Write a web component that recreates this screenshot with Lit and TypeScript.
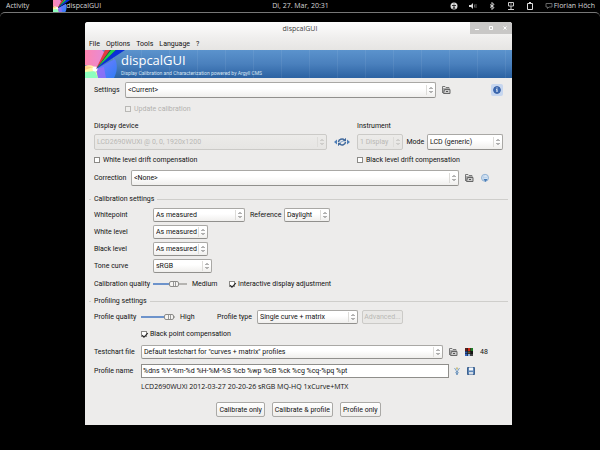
import { LitElement, html, css, svg } from "lit";
import { customElement, property } from "lit/decorators.js";

@customElement("drop-down")
class DropDown extends LitElement {
  @property() value = "";
  @property() label = "";
  @property({ type: Boolean }) disabled = false;

  static styles = css`
    :host { display: block; position: relative; height: 14px; min-width: 0; }
    .box {
      appearance: none; display: block; box-sizing: border-box; width: 100%; height: 100%;
      margin: 0; padding: 0 8px 0 2px; border: 1px solid #a9a8a5; border-bottom-color: #91908d;
      border-radius: 2px; background: linear-gradient(#fff 40%, #f0efed);
      color: #111; font: inherit; text-overflow: clip;
    }
    .box:disabled { opacity: 1; color: #b9b8b5; border-color: #cbcac7; background: linear-gradient(#ecebe9, #e6e5e3); }
    .arrows { position: absolute; right: 1px; top: 0; width: 9px; height: 100%; pointer-events: none; }
    .mark { fill: none; stroke: #666; stroke-width: 1; }
    .rule { stroke: #dddcd9; }
    .off .mark { stroke: #b5b4b1; }
  `;

  render() {
    return html`
      <select class="box" aria-label=${this.label} ?disabled=${this.disabled}>
        <option>${this.value}</option>
      </select>
      <svg class="arrows ${this.disabled ? "off" : ""}" viewBox="0 0 9 14" aria-hidden="true">
        <path class="rule" d="M.5 2v10" />
        <path class="mark" d="M3.500 6l1.500-1.500 1.500 1.500M3.500 8l1.500 1.500 1.500-1.500" />
      </svg>`;
  }
}

const folder = svg`<path d="M1.500 8V1.500h2.500l1 1h3V4" fill="none" stroke="#777"/><path d="M2 3h6v5H2z" fill="#aaa"/><path d="M3.500 4.500h5.500v4H2.500z" fill="#ccc" stroke="#666"/><path d="M5 6h2v1H5z" fill="#555"/>`;
const info = svg`<circle cx="5" cy="5" r="3.400" fill="#3c69b2" stroke="#3a62a6"/><path d="M4.500 2.500h1v1h-1zM4 4.300h1.500V7h-1V5H4z" fill="#fff"/>`;
const refresh = svg`<path d="M0 5l3-2.500v5zM16 5l-3-2.500v5z" fill="#4f7fb8"/><path d="M4.500 5a3.500 3 0 0 1 6-2M11.500 5a3.500 3 0 0 1-6 2" fill="none" stroke="#41699c" stroke-width="1.500"/><path d="M12 .8v3.400H8.600zM4 9.200V5.800h3.400z" fill="#41699c"/><path d="M6 5.500l3-1.500" stroke="#7da2cf"/>`;
const globe = svg`<circle cx="5" cy="4.800" r="3.500" fill="#d5e4f3" stroke="#8fb0d3"/><path d="M2.500 4.500h5M5 1.500c-2 2-2 4 0 6" fill="none" stroke="#b4cce6" stroke-width=".7"/><path d="M3.500 6h4L5.500 9z" fill="#4a7db6"/>`;
const swatches = svg`<path d="M1 1h8v8H1z" fill="#151515"/><path d="M1 1h2.500v3H1z" fill="#55201c"/><path d="M4 1h2.300v3H4z" fill="#d02818"/><path d="M6.700 1H9v3H6.700z" fill="#1d7c25"/><path d="M1 4.500h2.500v2H1z" fill="#2b55a8"/><path d="M4 4.500h2.300v2H4z" fill="#6a5a38"/><path d="M1 7h2.500v2H1z" fill="#3263bd"/><path d="M4 7h2.300v2H4z" fill="#8cb4e0"/><path d="M6.700 7H9v2H6.700z" fill="#444"/>`;
const wand = svg`<path d="M2.500 2l2.500 4 2.500-4M3.500 6L5 8.500 6.500 6" fill="none" stroke="#7fa5cb"/><path d="M4 1.500h2v2H4z" fill="#c9bd84"/><path d="M5 5v4" stroke="#5681ae"/>`;
const disk = svg`<path d="M1.500 1.500h7v7h-7z" fill="#5c86b8" stroke="#3f628f"/><path d="M3 1.500h4v3H3z" fill="#f3f6fa"/><path d="M3 6h4v2.500H3z" fill="#d6dde6"/>`;
const icon = (body: unknown, w = 10) => html`<svg class="ico" width=${w} height="10" viewBox="0 0 ${w} 10" aria-hidden="true">${body}</svg>`;
const fan = (w: number, h: number) => html`
  <svg class="fan" width=${w} height=${h} viewBox="0 0 42 28" preserveAspectRatio="none" aria-hidden="true">
    <defs>
      <linearGradient id="pk" x2="1" y2="0"><stop stop-color="#ff86b0" /><stop offset="1" stop-color="#e58bd8" /></linearGradient>
      <linearGradient id="bl" x1="0" y1="0" x2="1" y2="1"><stop stop-color="#7a7cff" /><stop offset="1" stop-color="#2f7df5" /></linearGradient>
    </defs>
    <path d="M0 0h17l3 3-9 16L0 15z" fill="url(#pk)" />
    <path d="M11 19L30 9c3 6 2 13-1 19H13z" fill="url(#bl)" />
    <path d="M11 19l8-2 2 11h-8z" fill="#a06cf5" opacity=".7" />
    <path d="M0 16c5-2 10 0 11 3l2 9H0z" fill="#fff7a8" />
    <path d="M0 22l10-1 3 7H0z" fill="#8dffbe" /><path d="M0 16l8 1-8 3z" fill="#ffd08c" />
    <circle cx="10" cy="19" r="2.500" fill="#fff" />
    <path d="M11 19L20 0h6z" fill="#e43b42" />
    <path d="M11 19L25 0h7z" fill="#1d4a3c" />
    <path d="M12 18L26 0h5z" fill="#22cf4e" />
    <path d="M11 19L31 0h9z" fill="#0a2fd8" />
  </svg>`;

@customElement("app-root")
class AppRoot extends LitElement {
  static styles = css`
    :host { display: block; min-height: 100vh; background: #000; color: #111; font: 7px/12px Roboto, "Open Sans", sans-serif; }
    * { box-sizing: border-box; }
    .panel, .caption, .brand, .output { font-family: "Open Sans", "Noto Sans", sans-serif; }
    .panel { display: grid; grid-template-columns: 1fr auto 1fr; align-items: center; height: 12px; padding: 0 5px 0 6px; color: #d6d6d6; }
    .left, .right { display: flex; align-items: center; }
    .app { display: flex; align-items: center; margin-left: 24px; }
    .app-name { margin-left: -5px; position: relative; }
    .right { justify-content: flex-end; gap: 9px; }
    .user { display: flex; align-items: center; }
    .edge { height: 10px; border-top: 1px solid #777; border-radius: 5px 5px 0 0; }
    .window { margin: 0 88px 0 85px; background: #edeceb; border-radius: 3px 3px 0 0; overflow: hidden; }
    .title { display: grid; grid-template-columns: 1fr auto 1fr; align-items: start; height: 16px; background: linear-gradient(#fdfdfd, #efeeed); }
    .caption { grid-column: 2; margin: 0; padding-left: 3px; font-size: 7px; line-height: 14px; font-weight: 400; color: #444; }
    .controls { justify-self: end; display: flex; background: #c9c8c7; }
    .control { width: 14px; height: 12px; padding: 0; border: 0; background: none; display: grid; place-items: center; }
    .menu { display: flex; gap: 6px; height: 12px; padding: 0 4px; background: linear-gradient(#efeeed, #e6e5e3); }
    .menu-item { padding: 0; border: 0; background: none; font: inherit; color: #111; }
    .banner { display: flex; height: 28px; color: #fff; background: repeating-linear-gradient(90deg, #fff1 0 1px, #fff0 1px 28px), linear-gradient(#5b93cd, #4a80bd 50%, #2b62a2); }
    .fan { flex: none; display: block; }
    .words { margin-left: -6px; position: relative; }
    .brand { margin: 0; font-size: 13px; line-height: 20px; font-weight: 400; }
    .tagline { margin: 0; font-size: 5px; line-height: 6px; color: #d6e4f3; }
    .body { padding: 4px 9px 8px; }
    .row { display: flex; align-items: center; height: 14px; }
    .tall { height: 16px; }
    .low { height: 12px; }
    .grow { flex: 1; }
    .fit { height: 100%; }
    .g2 { margin-top: 2px; } .g3 { margin-top: 3px; } .g4 { margin-top: 4px; } .g5 { margin-top: 5px; } .g7 { margin-top: 7px; }
    .name, .tail, .ico { flex: none; }
    .name, .check, .text { white-space: nowrap; }
    .settings { width: 31px; } .correction { width: 37px; } .cal { width: 59px; } .prof { width: 47px; }
    .reference { width: 34px; } .kind { width: 40px; }
    .devices { display: grid; grid-template-columns: 1fr 30px 146px; align-items: center; }
    .tail { display: flex; align-items: center; gap: 6px; padding-left: 5px; }
    .t67 { width: 67px; } .t60 { width: 60px; } .t54 { width: 54px; gap: 4px; padding-left: 3px; } .t44 { width: 44px; }
    .ico { display: block; }
    .center { justify-self: center; }
    .tool { padding: 0; border: 0; background: none; flex: none; }
    .info { margin-left: auto; padding: 1px; background: #c6d6ef; border-radius: 2px; }
    .check { display: flex; align-items: center; gap: 3px; }
    .faded { color: #b3b2af; }
    .tick { appearance: none; flex: none; width: 6px; height: 6px; margin: 0; border: 1px solid #8b8a87; background: #fff; display: grid; place-items: center; }
    .tick:disabled { border-color: #b9b8b5; background: #efeeec; }
    .tick:checked::before { content: ""; width: 5px; height: 2px; border: solid #222; border-width: 0 0 1px 1px; transform: rotate(-45deg); }
    .heading { display: flex; align-items: center; gap: 3px; margin-inline: -5px; margin-bottom: 0; height: 12px; font-size: inherit; font-weight: 400; }
    .heading::before, .heading::after { content: ""; height: 1px; background: #cfcecb; width: 2px; }
    .heading::after { flex: 1; }
    .w92 { width: 92px; } .w101 { width: 101px; } .w55 { width: 55px; } .w59 { width: 59px; } .w46 { width: 46px; } .w76 { width: 76px; }
    .slider { appearance: none; flex: none; width: 34px; height: 8px; margin: 0; background: linear-gradient(90deg, #6d93cb var(--fill), #b5b4b1 0) center / 100% 2px no-repeat; }
    .slider::-webkit-slider-thumb { appearance: none; width: 10px; height: 6px; border: 1px solid #8d8c89; border-radius: 2px; background: linear-gradient(90deg, transparent 3px, #999 3px 4px, transparent 4px 5px, #999 5px 6px, transparent 6px), #f5f4f2; }
    .after { margin-left: 5px; }
    .entry { height: 100%; min-width: 0; padding: 0 1px; border: 1px solid #8f8e8b; background: #fff; color: #111; font: inherit; }
    .push { height: 14px; padding: 0; border: 1px solid #aaa9a6; border-radius: 2px; background: linear-gradient(#fff, #eeedeb); color: #111; font: inherit; }
    .push:disabled { width: 41px; margin-left: 4px; color: #b9b8b5; border-color: #cbcac7; background: #e9e8e6; }
    .actions { display: flex; justify-content: center; gap: 7px; margin: 9px 0 0; }
    .action { height: 15px; padding: 0 2px; }
  `;

  private check(text: string, on = false, off = false) {
    return html`<label class="check ${off ? "faded" : ""}"><input class="tick" type="checkbox" ?checked=${on} ?disabled=${off} />${text}</label>`;
  }

  private drop(label: string, value: string, cls: string, off = false) {
    return html`<drop-down class=${cls} .label=${label} .value=${value} .disabled=${off}></drop-down>`;
  }

  private tool(label: string, body: unknown, cls = "") {
    return html`<button class="tool ${cls}" aria-label=${label}>${icon(body)}</button>`;
  }

  private slider(id: string, value: number) {
    return html`<input class="slider" id=${id} type="range" .value=${String(value)} style="--fill:${value}%" />`;
  }

  render() {
    return html`
      <header class="panel">
        <div class="left"><span>Activity</span><span class="app">${fan(18, 12)}<span class="app-name">dispcalGUI</span></span></div>
        <time>Di, 27. Mar, 20:31</time>
        <div class="right">
          ${icon(svg`<circle cx="5" cy="5" r="3.500" fill="#ddd"/><path d="M5 2.500v1M3 4.500h4M5 4v2M4 8l1-2 1 2" stroke="#222" stroke-width=".9" fill="none"/>`)}
          ${icon(svg`<path d="M1 4h2l2-2v6L3 6H1z" fill="#ddd"/><path d="M6.500 3.500v3M8 3v4" stroke="#777" stroke-width=".8"/>`)}
          ${icon(svg`<path d="M3 3.500l4 3-2 2v-7l2 2-4 3" stroke="#ddd" fill="none"/>`)}
          ${icon(svg`<path d="M2.500 1.500h5v3.500h-5zM5 5v3M2 8.500h6" stroke="#ccc" fill="none"/><path d="M4 3h2" stroke="#888"/>`)}
          ${icon(svg`<path d="M2.500 2.500h5v6h-5zM4 1.500h2" stroke="#ddd" fill="none"/>`)}
          <span class="user">${icon(svg`<path d="M2 2.500h6v3.500H5L3.500 7.500V6H2z" stroke="#666" fill="none"/>`)}Florian Höch</span>
        </div>
      </header>
      <div class="edge"></div>
      <main class="window">
        <div class="title">
          <h1 class="caption">dispcalGUI</h1>
          <div class="controls">
            ${["M3 6.500h4", "M3.500 3.500h3v3h-3z", "M3.500 3.500l3 3M6.500 3.500l-3 3"].map((d, i) => html`
              <button class="control" aria-label=${["Minimize", "Maximize", "Close"][i]}>${icon(svg`<path d=${d} fill="none" stroke="#fff"/>`)}</button>`)}
          </div>
        </div>
        <nav class="menu">${["File", "Options", "Tools", "Language", "?"].map((m) => html`<button class="menu-item">${m}</button>`)}</nav>
        <div class="banner">
          ${fan(42, 28)}
          <div class="words"><h2 class="brand">dispcalGUI</h2><p class="tagline">Display Calibration and Characterization powered by Argyll CMS</p></div>
        </div>
        <div class="body">
          <div class="row tall"><span class="name settings">Settings</span>${this.drop("Settings", "<Current>", "grow fit")}
            <span class="tail t67">${this.tool("Open settings", folder)}${this.tool("Info", info, "info")}</span></div>
          <div class="row low g5"><span class="name settings"></span>${this.check("Update calibration", false, true)}</div>
          <div class="devices low g5"><span>Display device</span><span></span><span>Instrument</span></div>
          <div class="devices tall g2">
            ${this.drop("Display device", "LCD2690WUXi @ 0, 0, 1920x1200", "fit", true)}
            <button class="tool center" aria-label="Detect">${icon(refresh, 16)}</button>
            <div class="row tall">${this.drop("Instrument", "1 Display", "w46 fit", true)}<span class="text grow">&nbsp; Mode</span>${this.drop("Mode", "LCD (generic)", "w76 fit")}</div>
          </div>
          <div class="devices low g4">${this.check("White level drift compensation")}<span></span>${this.check("Black level drift compensation")}</div>
          <div class="row tall g4"><span class="name correction">Correction</span>${this.drop("Correction", "<None>", "grow fit")}
            <span class="tail t44">${this.tool("Open correction", folder)}${this.tool("Web search", globe)}</span></div>

          <h3 class="heading g7">Calibration settings</h3>
          <div class="row g3"><span class="name cal">Whitepoint</span>${this.drop("Whitepoint", "As measured", "w92")}<span class="after name reference">Reference</span>${this.drop("Reference", "Daylight", "w46")}</div>
          <div class="row g3"><span class="name cal">White level</span>${this.drop("White level", "As measured", "w55")}</div>
          <div class="row g3"><span class="name cal">Black level</span>${this.drop("Black level", "As measured", "w55")}</div>
          <div class="row g3"><span class="name cal">Tone curve</span>${this.drop("Tone curve", "sRGB", "w59")}</div>
          <div class="row low g5"><label class="name cal" for="cq">Calibration quality</label>${this.slider("cq", 66)}<span class="after name correction">Medium</span>${this.check("Interactive display adjustment", true)}</div>

          <h3 class="heading g5">Profiling settings</h3>
          <div class="row g3"><label class="name prof" for="pq">Profile quality</label>${this.slider("pq", 95)}<span class="after name correction">High</span><span class="name kind">Profile type</span>${this.drop("Profile type", "Single curve + matrix", "w101")}<button class="push" disabled>Advanced...</button></div>
          <div class="row low g4"><span class="name prof"></span>${this.check("Black point compensation", true)}</div>
          <div class="row g5"><span class="name prof">Testchart file</span>${this.drop("Testchart file", 'Default testchart for "curves + matrix" profiles', "grow")}
            <span class="tail t60">${this.tool("Open testchart", folder)}${this.tool("Edit testchart", swatches)}<span>48</span></span></div>
          <div class="row g5"><label class="name prof" for="pn">Profile name</label><input class="entry grow" id="pn" value="%dns %Y-%m-%d %H-%M-%S %cb %wp %cB %ck %cg %cq-%pq %pt" />
            <span class="tail t54">${this.tool("Placeholders", wand)}${this.tool("Save", disk)}</span></div>
          <div class="row low g3"><span class="name prof"></span><span class="text output">LCD2690WUXi 2012-03-27 20-20-26 sRGB MQ-HQ 1xCurve+MTX</span></div>
          <div class="actions">${["Calibrate only", "Calibrate & profile", "Profile only"].map((t) => html`<button class="push action">${t}</button>`)}</div>
        </div>
      </main>`;
  }
}
